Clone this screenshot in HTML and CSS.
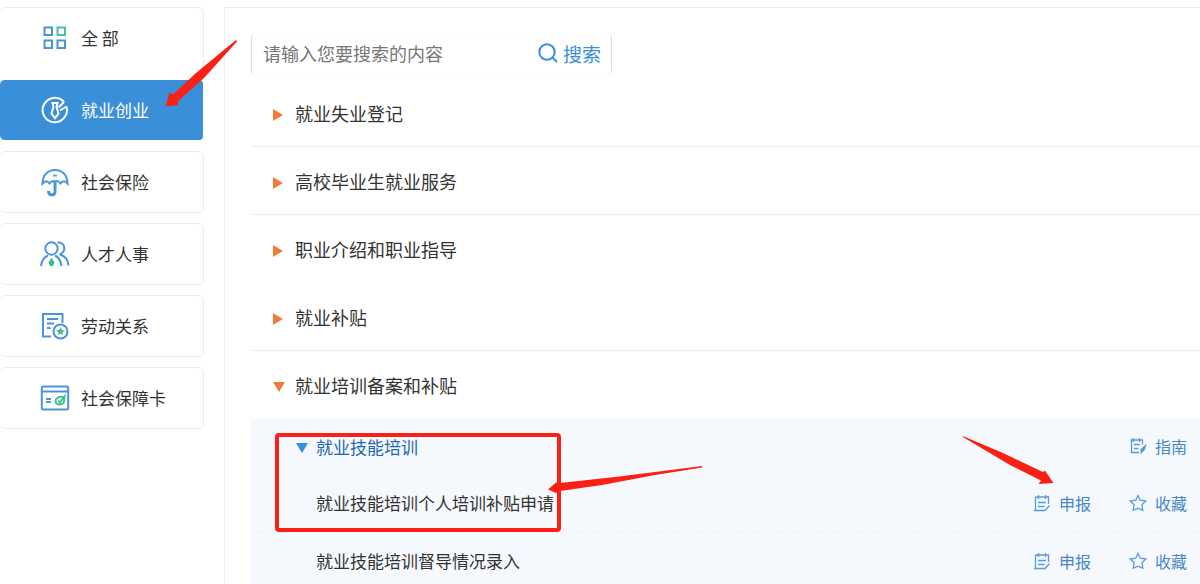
FILE: index.html
```html
<!DOCTYPE html>
<html lang="zh-CN">
<head>
<meta charset="utf-8">
<title>就业创业</title>
<link rel="stylesheet" href="styles.css">
</head>
<body>
<svg class="defs" width="0" height="0" aria-hidden="true">
  <symbol id="declare" viewBox="0 0 18 18">
    <path d="M2.500 3H15.500V10M2.500 3V16.500H12L16.500 11.500M5.500 1V5M12.500 1V5M5 8.500H13M5 12.500H11.500M1 16.500H4"/>
  </symbol>
  <symbol id="guide" viewBox="0 0 18 18">
    <path d="M1.500 3H13.500V7.500M2.500 3V15.500H10M4.500 1V5M10.500 1V5M5 7.500H11M5 11.500H9.500"/>
    <path class="solid" d="M16.500 8.500L15 13L12.500 15L12 12.500Z"/>
    <path d="M13 13L11.500 16.500"/>
  </symbol>
  <symbol id="star" viewBox="0 0 18 18">
    <path d="M9 1.500L11.300 6.200L16.800 7L12.900 10.800L13.800 16.300L9 14.200L4.200 16.300L5.100 10.800L1.200 7L6.700 6.200Z"/>
  </symbol>
</svg>

<div class="layout">
  <nav class="sidebar">
    <button class="nav-item nav-first" type="button">
      <svg class="nav-icon" viewBox="0 0 30 30"><path d="M4.500 4.500H12V12H4.500ZM4.500 17.500H12V25H4.500ZM17.500 17.500H25V25H17.500Z"/><path class="green" d="M17.500 4.500H25V12H17.500Z"/></svg>
      <span>全 部</span>
    </button>
    <button class="nav-item nav-active" type="button" aria-current="true">
      <svg class="nav-icon" viewBox="0 0 30 30"><path d="M24 7A12.200 12.200 0 1 0 26.500 11.500"/><path d="M12.500 8H17.500L16.500 12L18.500 18.500L15 23L11.500 18.500L13.500 12ZM24 7L18.500 12.500M26.500 11.500L20 15.500"/></svg>
      <span>就业创业</span>
    </button>
    <button class="nav-item" type="button">
      <svg class="nav-icon" viewBox="0 0 30 30"><path d="M2.500 16.500C2.500 8 8 3 15 3S27.500 8 27.500 16.500C25 13.500 22.500 13.500 20.500 16.500C18.500 13.500 17 13.500 15 14.500C13 13.500 11.500 13.500 9.500 16.500C7.500 13.500 5 13.500 2.500 16.500Z"/><path class="thick" d="M15 14.500V25C15 29 8.500 29 8.500 24"/><path class="green" d="M13 8.500H17"/></svg>
      <span>社会保险</span>
    </button>
    <button class="nav-item" type="button">
      <svg class="nav-icon" viewBox="0 0 30 30"><circle cx="11.500" cy="9.500" r="6.200"/><path d="M1 27C2 20.500 5 17.500 8 16.500M15 16.500C18.500 18 20.500 21 21.500 27M17.500 3.500C25 2.500 27 12.500 19.500 15.500M20 15.500C25 17 28 20 28.500 26.500"/><path class="green-fill" d="M11.500 18.500L14.500 23.500L13 27H10L8.500 23.500Z"/></svg>
      <span>人才人事</span>
    </button>
    <button class="nav-item" type="button">
      <svg class="nav-icon" viewBox="0 0 30 30"><path d="M22.500 12V3H3V25.500H11M7 8H18M7 12.500H14M7 17H10.500"/><circle cx="20.500" cy="20.500" r="7"/><path class="green-fill" d="M20.500 16L21.800 19L25 19.200L22.500 21.200L23.400 24.300L20.500 22.600L17.600 24.300L18.500 21.200L16 19.200L19.200 19Z"/></svg>
      <span>劳动关系</span>
    </button>
    <button class="nav-item" type="button">
      <svg class="nav-icon" viewBox="0 0 30 30"><rect x="1.800" y="3.500" width="26.400" height="23" rx="1.500"/><path d="M2 8.500H28M6 16H11M6 19H11"/><path class="green" d="M24 14.500C20 12.500 15.500 15 15.500 18.500C16 22.500 23 22.500 24 18.500L24.500 13.500L20 19.500L18 17.500"/></svg>
      <span>社会保障卡</span>
    </button>
  </nav>

  <main class="panel">
    <form class="search">
      <input class="search-input" type="text" aria-label="搜索内容" placeholder="请输入您要搜索的内容">
      <button class="search-button" type="button">
        <svg class="search-icon" viewBox="0 0 20 20"><circle cx="9" cy="9" r="7.700"/><path d="M14.500 14.500L19 19"/></svg>
        <span>搜索</span>
      </button>
    </form>

    <div class="category-list">
      <button class="category" type="button" aria-expanded="false"><span class="arrow-right"></span>就业失业登记</button>
      <button class="category" type="button" aria-expanded="false"><span class="arrow-right"></span>高校毕业生就业服务</button>
      <button class="category plain" type="button" aria-expanded="false"><span class="arrow-right"></span>职业介绍和职业指导</button>
      <button class="category" type="button" aria-expanded="false"><span class="arrow-right"></span>就业补贴</button>
      <button class="category plain" type="button" aria-expanded="true"><span class="arrow-down"></span>就业培训备案和补贴</button>
    </div>

    <section class="services">
      <div class="service service-head">
        <button class="service-toggle" type="button" aria-expanded="true"><span class="arrow-down blue"></span>就业技能培训</button>
        <a class="action" href="#"><svg class="action-icon"><use href="#guide"/></svg>指南</a>
      </div>
      <div class="service">
        <span class="service-name">就业技能培训个人培训补贴申请</span>
        <a class="action" href="#"><svg class="action-icon"><use href="#declare"/></svg>申报</a>
        <a class="action" href="#"><svg class="action-icon"><use href="#star"/></svg>收藏</a>
      </div>
      <div class="service">
        <span class="service-name">就业技能培训督导情况录入</span>
        <a class="action" href="#"><svg class="action-icon"><use href="#declare"/></svg>申报</a>
        <a class="action" href="#"><svg class="action-icon"><use href="#star"/></svg>收藏</a>
      </div>
    </section>
  </main>
</div>

<svg class="marks" width="1200" height="584" viewBox="0 0 1200 584" aria-hidden="true">
  <path d="M236 40L237 41.500L204 78L178 101L178.500 105L165.500 106.500L169.500 92.500L173 94.500L196 73Z"/>
  <rect x="277" y="435" width="282" height="95" rx="2"/>
  <path d="M702 466L702 467.500L655 475L602 485L560 491L556 493L548 489.500L556 482.500L560 483L615 477L655 472Z"/>
  <path d="M962 436.500L964 436.500L1003 453L1043 472L1045 470.500L1053.500 483L1038.500 484L1041 480.500L1010 465Z"/>
</svg>
</body>
</html>
```
FILE: styles.css
```css
* {
  box-sizing: border-box;
}

body {
  margin: 0;
  height: 100vh;
  overflow: hidden;
  position: relative;
  background: #fff;
  color: #333;
  font-family: "Noto Sans CJK SC", "Liberation Sans", sans-serif;
  font-size: 17px;
}

button,
input {
  font: inherit;
  color: inherit;
  background: none;
  border: 0;
  padding: 0;
  margin: 0;
}

.defs {
  position: absolute;
}

.layout {
  display: grid;
  grid-template-columns: 204px minmax(0, 1fr);
  column-gap: 20px;
  min-height: 100vh;
  padding-top: 7px;
}

.sidebar {
  display: flex;
  flex-direction: column;
  gap: 10px;
}

.nav-item {
  display: flex;
  align-items: center;
  gap: 11px;
  height: 62px;
  padding: 0 0 1px 40px;
  border: 1px solid #ececec;
  border-left: 0;
  border-radius: 5px;
  line-height: 24px;
}

.nav-first {
  border-bottom-color: transparent;
}

.nav-active {
  background: #3a8fd9;
  background-clip: padding-box;
  border-color: transparent;
  color: #fff;
}

.nav-icon {
  width: 30px;
  height: 30px;
  fill: none;
  stroke: #4a94da;
  stroke-width: 2;
}

.nav-active .nav-icon {
  stroke: #fff;
}

.nav-icon .thick {
  stroke-width: 3;
}

.nav-icon .green {
  stroke: #48c09a;
}

.nav-icon .green-fill {
  fill: #3dbd8c;
  stroke: none;
}

.panel {
  border-top: 1px solid #ececec;
  border-left: 1px solid #ececec;
  padding: 25px 0 0 26px;
}

.search {
  display: flex;
  align-items: center;
  width: 361px;
  height: 42px;
  padding: 0 10px 2px 11px;
  border: 1px solid #dcdcdc;
  border-top-color: #fafafa;
  border-bottom-color: #fafafa;
  border-radius: 5px;
}

.search-input {
  flex: 1;
  min-width: 0;
  font-size: 18px;
  outline: 0;
}

.search-input::placeholder {
  color: #777;
}

.search-button {
  display: flex;
  align-items: center;
  gap: 5px;
  color: #3a8fd9;
  font-size: 19px;
}

.search-icon {
  width: 20px;
  height: 20px;
  fill: none;
  stroke: #3a8fd9;
  stroke-width: 2;
}

.category-list {
  display: flex;
  flex-direction: column;
  padding-top: 4px;
}

.category {
  display: flex;
  align-items: center;
  height: 68px;
  padding-left: 22px;
  border-bottom: 1px solid #ececec;
  font-size: 18px;
  text-align: left;
}

.category.plain {
  border-bottom-color: transparent;
}

.arrow-right {
  width: 10px;
  margin: 4px 12px 0 0;
  border-left: 10px solid #f07c3a;
  border-top: 6px solid transparent;
  border-bottom: 6px solid transparent;
}

.arrow-down {
  width: 12px;
  margin: 4px 10px 0 0;
  border-top: 10px solid #f07c3a;
  border-left: 6px solid transparent;
  border-right: 6px solid transparent;
}

.arrow-down.blue {
  margin-right: 8px;
  border-top-color: #3a8fd9;
}

.services {
  background: #f5f8fd;
}

.service {
  display: flex;
  align-items: center;
  gap: 38px;
  height: 58px;
  padding: 0 13px 2px 65px;
  border-bottom: 1px dashed #edf0f5;
}

.service-head {
  height: 56px;
  padding-left: 45px;
  border-bottom: 0;
}

.service-toggle {
  display: flex;
  align-items: center;
  margin-right: auto;
  color: #1f66b3;
}

.service-name {
  margin-right: auto;
}

.action {
  display: flex;
  align-items: center;
  gap: 8px;
  color: #4787c7;
  font-size: 16px;
  text-decoration: none;
}

.action-icon {
  width: 18px;
  height: 18px;
  fill: none;
  stroke: #5a9ad6;
  stroke-width: 1.3;
}

.solid {
  fill: #4a8fd0;
}

.marks {
  position: absolute;
  top: 0;
  left: 0;
  pointer-events: none;
  fill: #fb2015;
}

.marks rect {
  fill: none;
  stroke: #fb2015;
  stroke-width: 4;
}
```
